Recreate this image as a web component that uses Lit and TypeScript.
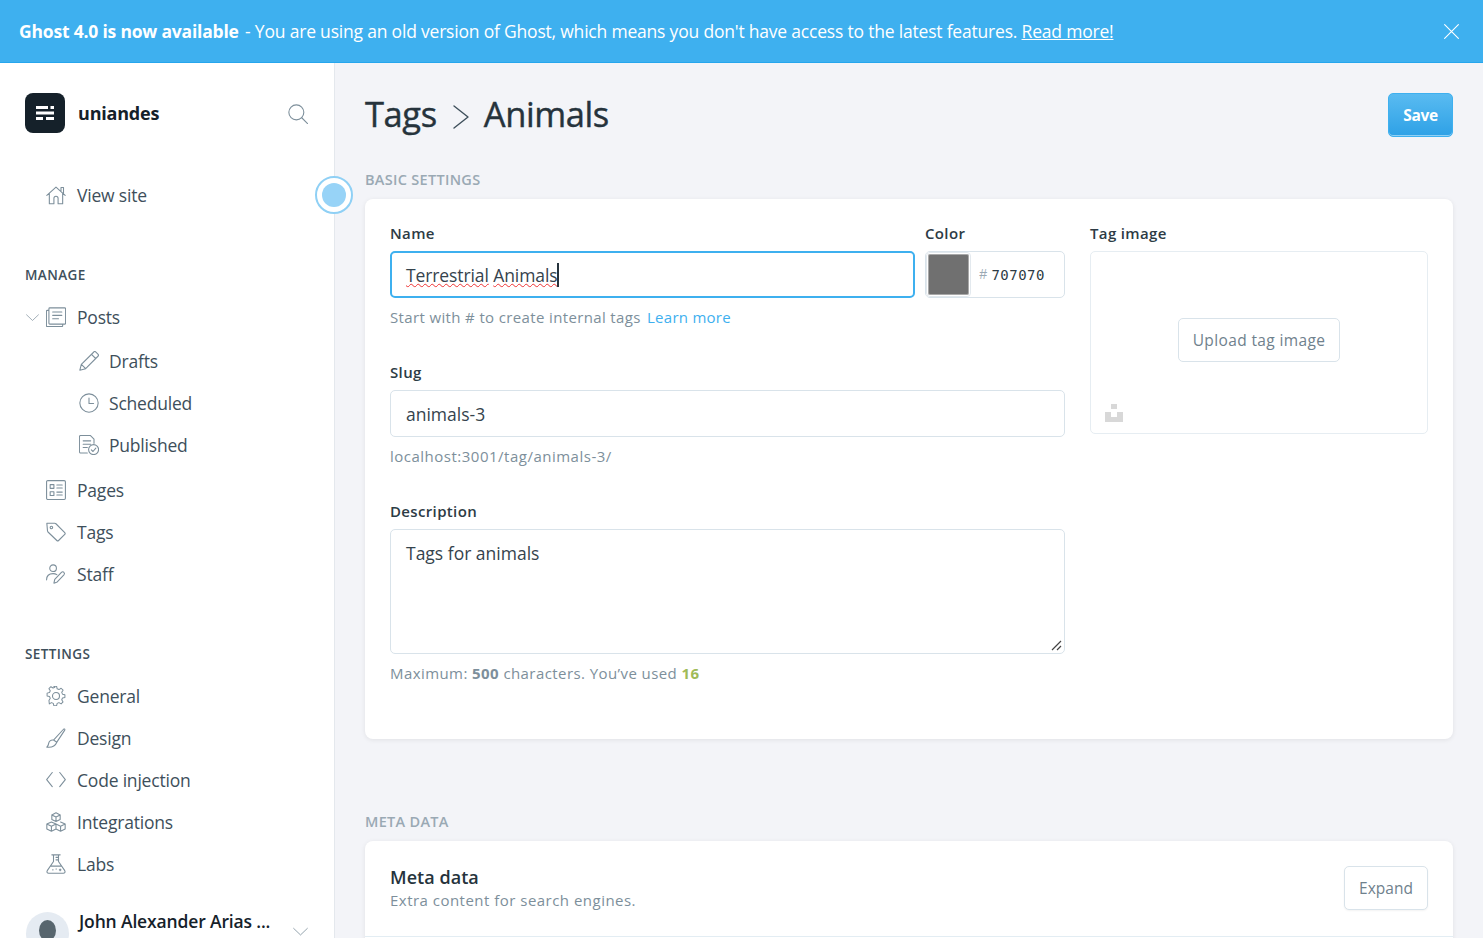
import { LitElement, html, css, svg } from "lit";
import { customElement } from "lit/decorators.js";

const icons: Record<string, unknown> = {
  home: svg`<path d="M1 12.500 12 2.500l11 10M4 10v12.500h5.500V16a2.500 2.500 0 0 1 5 0v6.500H20V10M18 6.500V3h3v6.500"/>`,
  posts: svg`<path d="M4.500 1h18a1 1 0 0 1 1 1v17.500a1 1 0 0 1-1 1h-18a1 1 0 0 1-1-1V2a1 1 0 0 1 1-1zM3.500 4H1.500a1 1 0 0 0-1 1v17.500a1 1 0 0 0 1 1H19a1 1 0 0 0 1-1v-2M8 6h11M8 10h11M8 14h7"/>`,
  pencil: svg`<path d="M1 23l1.800-7L17.500 1.300a2 2 0 0 1 2.800 0l2.400 2.400a2 2 0 0 1 0 2.800L8 21.200zM15 4l5 5M2.800 16 8 21.200M5 14 17.500 1.500M10 19 22.500 6.500"/>`,
  clock: svg`<circle cx="12" cy="12" r="11"/><path d="M12 6v6.500h5.500"/>`,
  published: svg`<path d="M10 21.500H2a1.500 1.500 0 0 1-1.500-1.500V2A1.500 1.500 0 0 1 2 .5h11.500L18 5v5M5 7h9M5 11h9M5 15h5"/><circle cx="17.500" cy="17.500" r="6"/><path d="m14.800 17.800 2 2 3.400-4"/>`,
  pages: svg`<rect x=".7" y=".7" width="22.600" height="22.600" rx="1.500"/><path d="M5 5.500h4.500V10H5zM5 14h4.500v4.500H5zM13 6h6.500M13 9.500h6.500M13 14.500h6.500M13 18h6.500"/>`,
  tag: svg`<path d="M1 1.500h9.500a2 2 0 0 1 1.400.6l10.600 10.600a1.500 1.500 0 0 1 0 2.100l-7.400 7.400a1.500 1.500 0 0 1-2.100 0L2.400 12a2 2 0 0 1-.6-1.400z"/><circle cx="6.500" cy="6.500" r="1.500"/>`,
  staff: svg`<circle cx="8.500" cy="5" r="4"/><path d="M.7 19c0-4.500 3-7.500 7.800-7.500 1.800 0 3.300.4 4.500 1.200M9.500 23l1-4.500 8-8.500c1-1 2.200-1 3 0 .9.900.9 2 0 3l-8 8.500z"/>`,
  gear: svg`<circle cx="12" cy="12" r="4.200"/><path d="M10.200 1h3.600l.7 3.200 2.300 1 2.800-1.700 2.500 2.500-1.700 2.800 1 2.300 3.100.7v3.600l-3.100.7-1 2.300 1.700 2.800-2.500 2.500-2.800-1.700-2.300 1-.7 3h-3.600l-.7-3-2.300-1-2.800 1.700L3.900 19.200l1.700-2.800-1-2.300-3.100-.7V9.800l3.100-.7 1-2.300L3.900 4 6.400 1.500l2.800 1.700 2.300-1z" transform="translate(12 12) scale(.93) translate(-13 -13.500)"/>`,
  brush: svg`<path d="M9 14.500 21 1.500c.8-.8 2-.1 1.500 1L13 17zM9 14.500c-3.500-.5-5.500 1.500-5.800 4C3 20.500 2 22 1 23c4 .5 9.500 0 12-6"/>`,
  code: svg`<path d="M7.500 3 .8 11.500 7.500 20M16.500 3l6.700 8.500L16.500 20"/>`,
  cubes: svg`<path d="M12 1l5 2.500v5.500L12 11.500 7 9V3.500zM7 3.500l5 2.500 5-2.500M12 6v5.500M6.500 12l5.500 2.500v6L6.500 23 1 20.500v-6zM1 14.500 6.500 17 12 14.500M6.500 17v6M17.500 12l5.500 2.500v6L17.500 23 12 20.500M12 14.500l5.500 2.500 5.500-2.500M17.500 17v6"/>`,
  flask: svg`<path d="M7 1h10M9 1v8L1.500 20c-1 1.600 0 3 1.700 3h17.600c1.700 0 2.700-1.400 1.700-3L15 9V1M5.500 14.500h13M12 4h3M12 7h3"/><path d="M8 19h.5M12 18h.5M16 19h2M17 18v2"/>`,
  chevDown: svg`<path d="M1 7l11 10.500L23 7"/>`,
  chevRight: svg`<path d="M5 1l14 11L5 23"/>`,
  search: svg`<circle cx="10" cy="10" r="9"/><path d="m16.500 16.500 7 7"/>`,
  close: svg`<path d="M1 1l22 22M23 1 1 23"/>`,
};

const icon = (name: string, cls = "") =>
  html`<svg class="icon ${cls}" viewBox="0 0 24 24">${icons[name]}</svg>`;

const manage = [
  { label: "Posts", icon: "posts", caret: true },
  { label: "Drafts", icon: "pencil", sub: true },
  { label: "Scheduled", icon: "clock", sub: true },
  { label: "Published", icon: "published", sub: true, last: true },
  { label: "Pages", icon: "pages" },
  { label: "Tags", icon: "tag" },
  { label: "Staff", icon: "staff" },
];

const settings = [
  { label: "General", icon: "gear" },
  { label: "Design", icon: "brush" },
  { label: "Code injection", icon: "code" },
  { label: "Integrations", icon: "cubes" },
  { label: "Labs", icon: "flask" },
];

@customElement("app-root")
export class AppRoot extends LitElement {
  static styles = css`
    :host {
      display: flex;
      flex-direction: column;
      height: 938px;
      overflow: hidden;
      position: relative;
      font-family: "Open Sans", "Noto Sans", sans-serif;
      color: #15212a;
      background: #f3f4f8;
    }
    * { box-sizing: border-box; }

    .icon {
      width: 20px;
      height: 20px;
      flex: none;
      fill: none;
      stroke: #7d8f9b;
      stroke-width: 1.3;
      stroke-linecap: round;
      stroke-linejoin: round;
    }

    .banner {
      flex: none;
      height: 63px;
      display: flex;
      align-items: center;
      justify-content: space-between;
      padding: 0 24px 0 19px;
      background: #3eb0ef;
      border-bottom: 1px solid #26a6ed;
      color: #fff;
      font-size: 17.5px;
      letter-spacing: -0.2px;
      white-space: nowrap;
    }
    .banner b { font-weight: 700; margin-right: 2px; }
    .banner a { color: #fff; text-decoration: underline; }
    .banner .icon { width: 15px; height: 15px; stroke: #fff; stroke-width: 1.8; }

    .body {
      flex: 1;
      display: flex;
      min-height: 0;
    }

    .side {
      flex: none;
      width: 335px;
      background: #fff;
      border-right: 1px solid #e4e8ed;
      padding: 30px 25px 0;
      color: #3e4f5b;
      font-size: 17.5px;
    }
    .brand {
      display: flex;
      align-items: center;
      height: 40px;
    }
    .logo {
      width: 40px;
      height: 40px;
      border-radius: 8px;
      background: #15212a;
      display: flex;
      align-items: center;
      justify-content: center;
      margin-right: 13px;
    }
    .logo svg { width: 20px; height: 20px; fill: #fff; }
    .brand-name {
      flex: 1;
      font-size: 18px;
      font-weight: 700;
      color: #15212a;
      letter-spacing: -0.2px;
    }
    .brand .icon { margin: 2px 1px 0 0; }

    .view-site { margin-top: 41px; }
    .row {
      height: 42px;
      display: flex;
      align-items: center;
      padding-left: 21px;
      gap: 11px;
      white-space: nowrap;
      letter-spacing: -0.2px;
      position: relative;
    }
    .row.sub { padding-left: 54px; gap: 10px; }
    .row.last { margin-bottom: 3px; }
    .row.parent { margin-bottom: 2px; }
    .caret {
      position: absolute;
      left: 1px;
      top: 15px;
      width: 13px;
      height: 13px;
    }
    .heading {
      font-size: 13.5px;
      font-weight: 600;
      letter-spacing: 0.4px;
      text-transform: uppercase;
      color: #3e4f5b;
      line-height: 18px;
    }
    .h-manage { margin-top: 50px; margin-bottom: 12px; }
    .h-settings { margin-top: 50px; margin-bottom: 12px; }

    .user {
      display: flex;
      margin-top: 27px;
      align-items: flex-start;
    }
    .avatar {
      width: 43px;
      height: 43px;
      margin-left: 1px;
      border-radius: 50%;
      background: #e5ebf2;
      display: flex;
      justify-content: center;
      padding-top: 8px;
      flex: none;
    }
    .avatar i {
      display: block;
      width: 17px;
      height: 21px;
      border-radius: 50%;
      background: #58666e;
    }
    .user-name {
      flex: 1;
      margin: -3px 0 0 10px;
      font-size: 17.5px;
      font-weight: 600;
      color: #15212a;
      letter-spacing: -0.15px;
      white-space: nowrap;
    }
    .user .icon { width: 15px; height: 15px; margin: 12px 1px 0 0; }

    .main {
      flex: 1;
      min-width: 0;
      padding: 30px;
    }
    .head {
      display: flex;
      align-items: center;
      height: 44px;
      font-size: 34.5px;
      font-weight: 500;
      color: #26333c;
      letter-spacing: -0.4px;
      -webkit-text-stroke: 0.4px #26333c;
    }
    .head span { margin-bottom: 3px; }
    .head .icon { width: 24px; height: 24px; margin: 3px 11px 0 12px; stroke: #3e4f5b; stroke-width: 1.4; }
    .save {
      margin-left: auto;
      width: 65px;
      height: 44px;
      border: 1px solid #3eb0ef;
      border-radius: 5px;
      background: linear-gradient(#59bbf1, #2ea1e6);
      box-shadow: inset 0 -1px 0 #8fd0f5;
      color: #fff;
      font: 700 15.5px "Open Sans", sans-serif;
      -webkit-text-stroke: 0;
      display: flex;
      align-items: center;
      justify-content: center;
    }
    .section {
      font-size: 14.5px;
      font-weight: 600;
      color: #9aa9b4;
      text-transform: uppercase;
      letter-spacing: 0.3px;
      line-height: 20px;
    }
    .s-basic { margin: 33px 0 9px; }
    .s-meta { margin: 73px 0 9px; }

    .card {
      background: #fff;
      border-radius: 8px;
      box-shadow: 0 1px 5px rgba(0, 0, 0, 0.08);
    }
    .basic {
      height: 540px;
      padding: 25px;
      display: grid;
      grid-template-columns: 675px 338px;
      gap: 25px;
    }
    .label {
      display: block;
      font-size: 15px;
      font-weight: 600;
      color: #2d3b45;
      line-height: 18px;
      margin-bottom: 9px;
      letter-spacing: 0.35px;
    }
    .field { height: 139px; }
    .top-fields { display: flex; gap: 10px; }
    .grow { flex: 1; }
    .input {
      height: 47px;
      border: 1px solid #d9e3ea;
      border-radius: 5px;
      padding: 0 15px;
      font-size: 17.5px;
      color: #35434d;
      display: flex;
      align-items: center;
      background: #fff;
    }
    .focus {
      border: 2px solid #3eb0ef;
      padding: 0 14px;
      letter-spacing: -0.1px;
    }
    .typed {
      text-decoration: underline wavy #e33;
      text-decoration-thickness: 1px;
      text-underline-offset: 1px;
    }
    .cursor {
      width: 2px;
      height: 24px;
      background: #26333c;
    }
    .color { width: 140px; }
    .color-box { padding: 0; }
    .swatch {
      width: 45px;
      height: 45px;
      flex: none;
      background: #707070;
      border: 2px solid #fff;
      border-radius: 4px;
      box-shadow: inset 0 0 0 1px #a8a8a8;
      outline: 1px solid #e3e9ee;
      outline-offset: -1px;
    }
    .hash { margin-left: 8px; color: #9aa9b4; font: 14px "Liberation Mono", monospace; }
    .hex { margin-left: 4px; color: #2d3b45; font: 14px "DejaVu Sans Mono", monospace; letter-spacing: 0.5px; }
    .hint {
      font-size: 15px;
      line-height: 20px;
      color: #7d8f9b;
      margin-top: 9px;
      letter-spacing: 0.36px;
    }
    .hint.url { letter-spacing: 0.5px; }
    .hint.max { letter-spacing: 0.42px; }
    .hint a { color: #3eb0ef; margin-left: 2px; letter-spacing: 0.26px; }
    .hint b { font-weight: 700; color: #7d8f9b; }
    .hint .count { color: #9fbb58; }
    .textarea {
      height: 125px;
      align-items: flex-start;
      padding-top: 11px;
      position: relative;
    }
    .grip {
      position: absolute;
      right: 2px;
      bottom: 2px;
      width: 11px;
      height: 11px;
      stroke: #444;
      stroke-width: 1.2;
      fill: none;
    }
    .uploader {
      height: 183px;
      border: 1px solid #e6edf2;
      border-radius: 5px;
      display: flex;
      align-items: center;
      justify-content: center;
      position: relative;
      padding-bottom: 6px;
    }
    .btn {
      background: #fff;
      border: 1px solid #d9e3ea;
      border-radius: 5px;
      color: #6f818d;
      font-size: 15.5px;
      display: flex;
      align-items: center;
      justify-content: center;
    }
    .upload { width: 162px; height: 44px; letter-spacing: 0.37px; }
    .unsplash {
      position: absolute;
      left: 14px;
      bottom: 11px;
      width: 18px;
      height: 18px;
      fill: #d8d8d8;
    }
    .meta {
      height: 120px;
    }
    .meta-head {
      height: 96px;
      padding: 25px;
      display: flex;
      align-items: flex-start;
      justify-content: space-between;
      border-bottom: 1px solid #e3edf3;
    }
    .meta h3 {
      margin: 0;
      font-size: 18px;
      font-weight: 600;
      line-height: 22px;
      color: #26333c;
      letter-spacing: 0.05px;
    }
    .meta p { margin: 2px 0 0; font-size: 15px; line-height: 20px; color: #7d8f9b; letter-spacing: 0.48px; }
    .expand { width: 84px; height: 44px; box-shadow: 0 1px 2px rgba(0, 0, 0, 0.05); }

    .pulse {
      position: absolute;
      left: 315px;
      top: 176px;
      width: 38px;
      height: 38px;
      border-radius: 50%;
      border: 2px solid #8fd0f5;
      background: #fff;
      display: flex;
      align-items: center;
      justify-content: center;
    }
    .pulse i {
      display: block;
      width: 24px;
      height: 24px;
      border-radius: 50%;
      background: #97d3f7;
    }
  `;

  private navRow(item: { label: string; icon: string; caret?: boolean; sub?: boolean; last?: boolean }) {
    return html`<div class="row ${item.sub ? "sub" : ""} ${item.last ? "last" : ""} ${item.caret ? "parent" : ""}">
      ${item.caret ? icon("chevDown", "caret") : ""} ${icon(item.icon)}
      <span>${item.label}</span>
    </div>`;
  }

  render() {
    return html`
      <div class="banner">
        <span><b>Ghost 4.0 is now available</b> - You are using an old version of Ghost, which means you don't have access to the latest features. <a>Read more!</a></span>
        ${icon("close")}
      </div>
      <div class="body">
        <aside class="side">
          <div class="brand">
            <div class="logo">
              <svg viewBox="0 0 20 20">
                <path d="M1 3h12v3H1zM15.500 3H19v3h-3.500zM1 8.500h18v3H1zM1 14h7v3H1zM11 14h8v3h-8z" />
              </svg>
            </div>
            <div class="brand-name">uniandes</div>
            ${icon("search")}
          </div>
          <div class="view-site">${this.navRow({ label: "View site", icon: "home" })}</div>
          <div class="heading h-manage">Manage</div>
          ${manage.map((i) => this.navRow(i))}
          <div class="heading h-settings">Settings</div>
          ${settings.map((i) => this.navRow(i))}
          <div class="user">
            <div class="avatar"><i></i></div>
            <div class="user-name">John Alexander Arias ...</div>
            ${icon("chevDown")}
          </div>
        </aside>
        <main class="main">
          <div class="head">
            <span>Tags</span>${icon("chevRight")}<span>Animals</span>
            <div class="save">Save</div>
          </div>
          <div class="section s-basic">Basic settings</div>
          <section class="card basic">
            <div>
              <div class="field">
                <div class="top-fields">
                  <div class="grow">
                    <label class="label">Name</label>
                    <div class="input focus">
                      <span class="typed">Terrestrial</span>&nbsp;<span class="typed">Animals</span><span class="cursor"></span>
                    </div>
                  </div>
                  <div class="color">
                    <label class="label">Color</label>
                    <div class="input color-box">
                      <div class="swatch"></div>
                      <span class="hash">#</span><span class="hex">707070</span>
                    </div>
                  </div>
                </div>
                <div class="hint">Start with # to create internal tags <a>Learn more</a></div>
              </div>
              <div class="field">
                <label class="label">Slug</label>
                <div class="input">animals-3</div>
                <div class="hint url">localhost:3001/tag/animals-3/</div>
              </div>
              <div class="field">
                <label class="label">Description</label>
                <div class="input textarea">
                  Tags for animals
                  <svg class="grip" viewBox="0 0 11 11"><path d="M1 10 10 1M6 10l4-4" /></svg>
                </div>
                <div class="hint max">Maximum: <b>500</b> characters. You’ve used <b class="count">16</b></div>
              </div>
            </div>
            <div>
              <label class="label">Tag image</label>
              <div class="uploader">
                <div class="btn upload">Upload tag image</div>
                <svg class="unsplash" viewBox="0 0 18 18">
                  <path d="M6 0h6v5H6zM0 8h6v5h6V8h6v10H0z" />
                </svg>
              </div>
            </div>
          </section>
          <div class="section s-meta">Meta data</div>
          <section class="card meta">
            <div class="meta-head">
              <div>
                <h3>Meta data</h3>
                <p>Extra content for search engines.</p>
              </div>
              <div class="btn expand">Expand</div>
            </div>
          </section>
        </main>
      </div>
      <div class="pulse"><i></i></div>
    `;
  }
}
